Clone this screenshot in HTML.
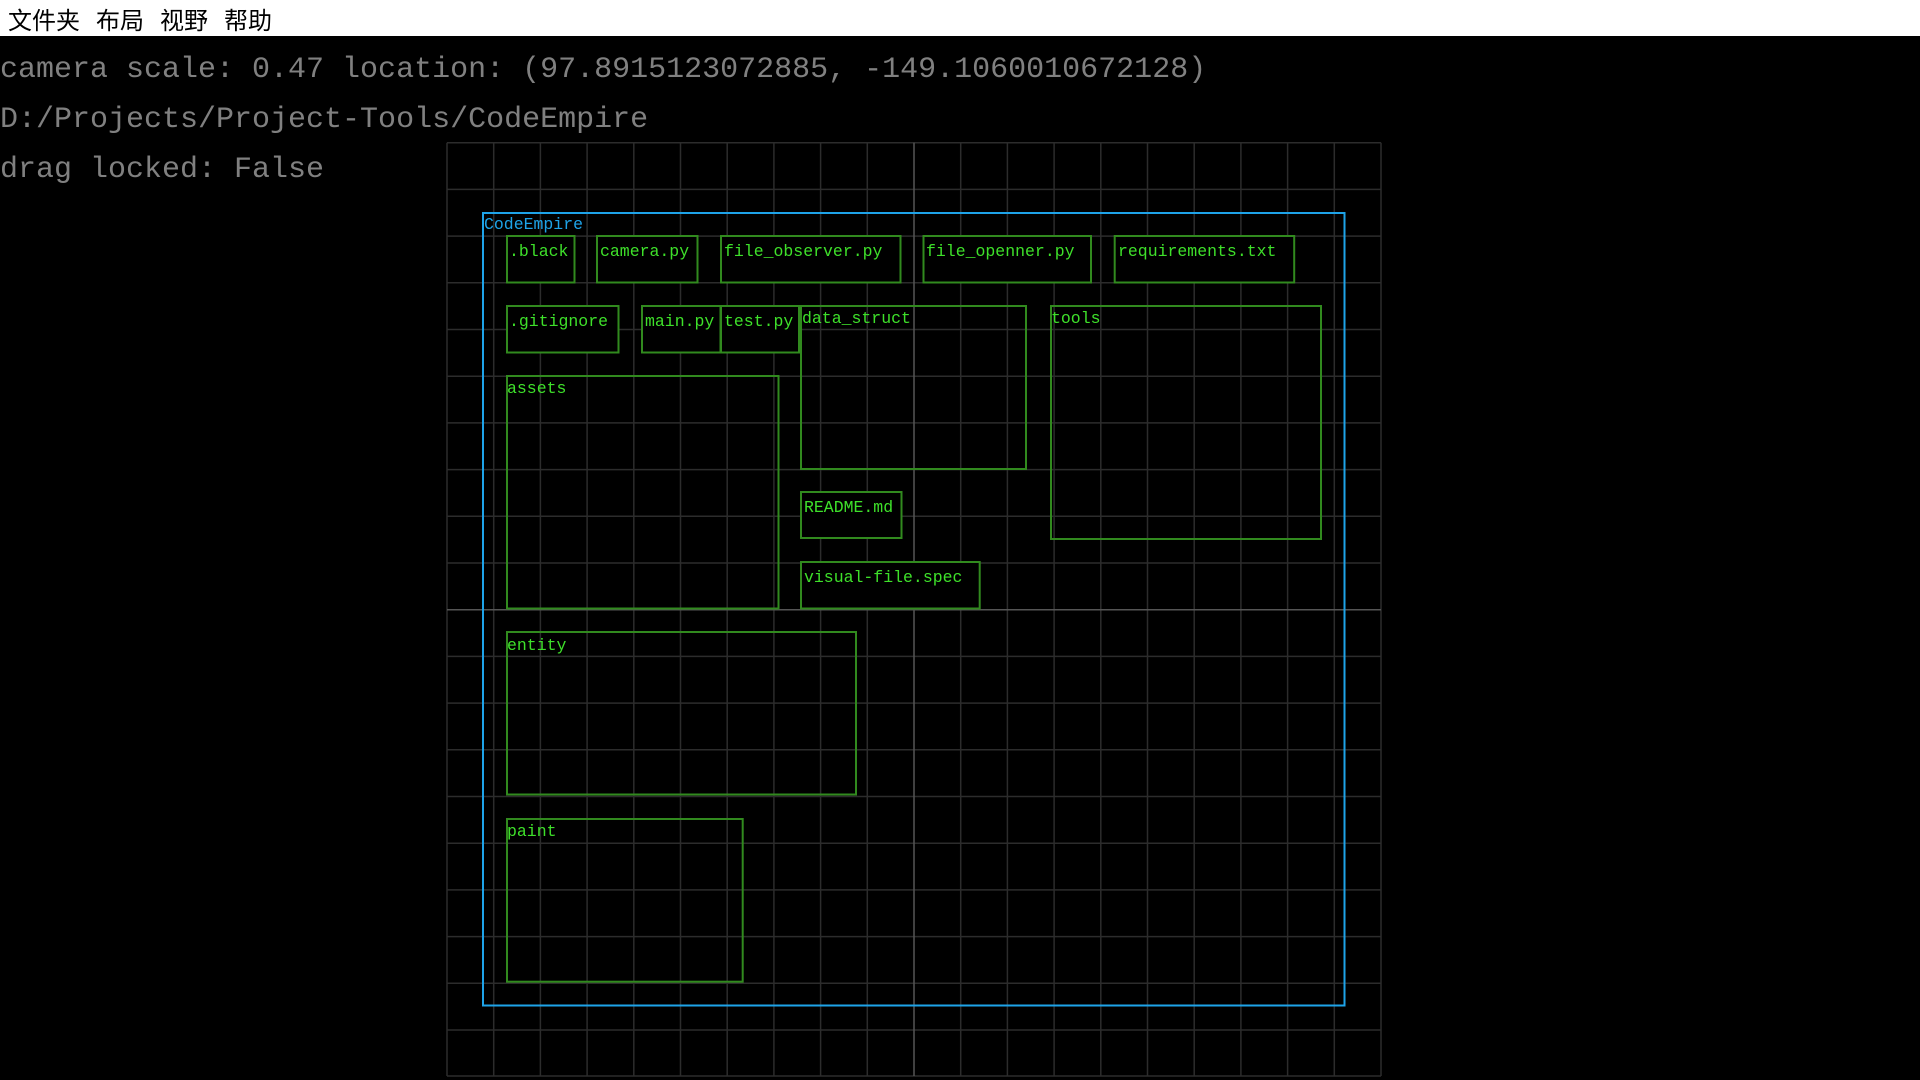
<!DOCTYPE html>
<html><head><meta charset="utf-8"><style>
html,body{margin:0;padding:0;width:1920px;height:1080px;background:#000;overflow:hidden}
#menu{position:absolute;left:0;top:0;width:1920px;height:36px;background:#fff;font-family:"Liberation Sans","Noto Sans CJK SC",sans-serif;font-size:24px;color:#000}
#menu span{position:absolute;top:1px}
.info{position:absolute;left:0;font-family:"Liberation Mono",monospace;font-size:30px;color:#808080;white-space:pre;letter-spacing:0}
svg{position:absolute;left:0;top:0}
</style></head><body>
<div id="menu"><span style="left:8px">文件夹</span><span style="left:96px">布局</span><span style="left:160px">视野</span><span style="left:224px">帮助</span></div>
<div class="info" style="top:53px">camera scale: 0.47 location: (97.8915123072885, -149.1060010672128)</div>
<div class="info" style="top:103px">D:/Projects/Project-Tools/CodeEmpire</div>
<div class="info" style="top:153px">drag locked: False</div>
<svg width="1920" height="1080" xmlns="http://www.w3.org/2000/svg" style="top:0">
<g id="grid" stroke="#2c2c2c" stroke-width="1.5">
<line x1="447" y1="142.7" x2="447" y2="1076"/><line x1="493.7" y1="142.7" x2="493.7" y2="1076"/><line x1="540.4" y1="142.7" x2="540.4" y2="1076"/><line x1="587.1" y1="142.7" x2="587.1" y2="1076"/><line x1="633.8" y1="142.7" x2="633.8" y2="1076"/><line x1="680.5" y1="142.7" x2="680.5" y2="1076"/><line x1="727.2" y1="142.7" x2="727.2" y2="1076"/><line x1="773.9" y1="142.7" x2="773.9" y2="1076"/><line x1="820.6" y1="142.7" x2="820.6" y2="1076"/><line x1="867.3" y1="142.7" x2="867.3" y2="1076"/><line x1="960.7" y1="142.7" x2="960.7" y2="1076"/><line x1="1007.4" y1="142.7" x2="1007.4" y2="1076"/><line x1="1054.1" y1="142.7" x2="1054.1" y2="1076"/><line x1="1100.8" y1="142.7" x2="1100.8" y2="1076"/><line x1="1147.5" y1="142.7" x2="1147.5" y2="1076"/><line x1="1194.2" y1="142.7" x2="1194.2" y2="1076"/><line x1="1240.9" y1="142.7" x2="1240.9" y2="1076"/><line x1="1287.6" y1="142.7" x2="1287.6" y2="1076"/><line x1="1334.3" y1="142.7" x2="1334.3" y2="1076"/><line x1="1381" y1="142.7" x2="1381" y2="1076"/>
<line y1="142.7" x1="447" y2="142.7" x2="1381"/><line y1="189.4" x1="447" y2="189.4" x2="1381"/><line y1="236.1" x1="447" y2="236.1" x2="1381"/><line y1="282.8" x1="447" y2="282.8" x2="1381"/><line y1="329.5" x1="447" y2="329.5" x2="1381"/><line y1="376.2" x1="447" y2="376.2" x2="1381"/><line y1="422.9" x1="447" y2="422.9" x2="1381"/><line y1="469.6" x1="447" y2="469.6" x2="1381"/><line y1="516.3" x1="447" y2="516.3" x2="1381"/><line y1="563" x1="447" y2="563" x2="1381"/><line y1="656.4" x1="447" y2="656.4" x2="1381"/><line y1="703.1" x1="447" y2="703.1" x2="1381"/><line y1="749.8" x1="447" y2="749.8" x2="1381"/><line y1="796.5" x1="447" y2="796.5" x2="1381"/><line y1="843.2" x1="447" y2="843.2" x2="1381"/><line y1="889.9" x1="447" y2="889.9" x2="1381"/><line y1="936.6" x1="447" y2="936.6" x2="1381"/><line y1="983.3" x1="447" y2="983.3" x2="1381"/><line y1="1030" x1="447" y2="1030" x2="1381"/><line y1="1076" x1="447" y2="1076" x2="1381"/>
</g>
<g stroke="#555" stroke-width="1.5"><line x1="914" y1="142.7" x2="914" y2="1076"/><line x1="447" y1="609.7" x2="1381" y2="609.7"/></g>
<rect x="483" y="213" width="861.5" height="792.5" fill="none" stroke="#1ea3e8" stroke-width="2"/>
<text x="484" y="229" font-family="Liberation Mono, monospace" font-size="16.5" fill="#1ea3e8">CodeEmpire</text>
<g fill="#000" stroke="#318a1e" stroke-width="2">
<rect x="507" y="236" width="67.5" height="46.5"/>
<rect x="597" y="236" width="100.5" height="46.5"/>
<rect x="721" y="236" width="179.5" height="46.5"/>
<rect x="923.5" y="236" width="167.5" height="46.5"/>
<rect x="1114.7" y="236" width="179.5" height="46.5"/>
<rect x="507" y="306" width="111.5" height="46.5"/>
<rect x="642" y="306" width="78.5" height="46.5"/>
<rect x="721" y="306" width="78" height="46.5"/>
<rect x="801" y="492" width="100.5" height="46"/>
<rect x="801" y="562" width="178.7" height="46.5"/>
</g>
<g fill="none" stroke="#318a1e" stroke-width="2">
<rect x="801" y="306" width="225" height="163"/>
<rect x="1051" y="306" width="270" height="233"/>
<rect x="507" y="376" width="271.5" height="232.5"/>
<rect x="507" y="632" width="349" height="162.5"/>
<rect x="507" y="819" width="235.7" height="162.7"/>
</g>
<g font-family="Liberation Mono, monospace" font-size="16.5" fill="#3ee02a">
<text x="509" y="256">.black</text>
<text x="600" y="256">camera.py</text>
<text x="724" y="256">file_observer.py</text>
<text x="926" y="256">file_openner.py</text>
<text x="1118" y="256">requirements.txt</text>
<text x="509" y="326">.gitignore</text>
<text x="645" y="326">main.py</text>
<text x="724" y="326">test.py</text>
<text x="802" y="323">data_struct</text>
<text x="1051" y="323">tools</text>
<text x="507" y="393">assets</text>
<text x="804" y="512">README.md</text>
<text x="804" y="582">visual-file.spec</text>
<text x="507" y="650">entity</text>
<text x="507" y="836">paint</text>
</g>
</svg>
</body></html>
